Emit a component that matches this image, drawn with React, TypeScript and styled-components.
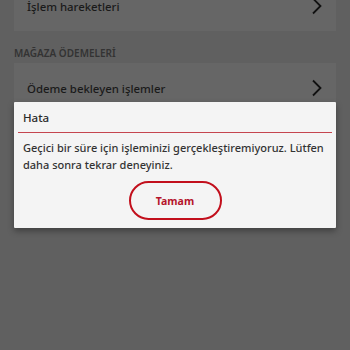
import React from "react";
import styled, { createGlobalStyle } from "styled-components";

const Global = createGlobalStyle`
  html, body { margin: 0; padding: 0; }
  body {
    width: 350px; height: 350px; overflow: hidden;
    background: #606060;
    font-family: "Noto Sans", "Open Sans", sans-serif;
  }
`;

const Screen = styled.div`
  position: relative;
  width: 350px;
  height: 350px;
  background: #606060;
  overflow: hidden;
`;

const Page = styled.div`
  display: flex;
  flex-direction: column;
  margin-top: -19px;
`;

const Card = styled.div`
  margin: 0 14px;
  background: #666666;
`;

const Row = styled.div`
  height: 50px;
  display: flex;
  align-items: center;
  justify-content: space-between;
  padding: 0 13px 0 13px;
  font-size: 11.4px;
  font-weight: 500;
  color: #1a1a1a;
`;

const SectionTitle = styled.div<{ $top: number }>`
  padding: ${(p) => p.$top}px 14px 3px;
  font-size: 10px;
  font-weight: 600;
  color: #333333;
`;

const Chevron = () => (
  <svg width="12" height="18" viewBox="0 0 12 18">
    <path d="M2 1.5 L9.5 9 L2 16.5" fill="none" stroke="#111" strokeWidth="1.8" />
  </svg>
);

const Dialog = styled.div`
  position: absolute;
  left: 14px;
  top: 102px;
  width: 322px;
  background: #f4f4f4;
  box-shadow: 0 3px 6px rgba(0, 0, 0, 0.35);
  border-radius: 1px;
  display: flex;
  flex-direction: column;
`;

const Title = styled.div`
  margin: 0 4px;
  padding: 8px 5px 7px;
  font-size: 11.5px;
  font-weight: 500;
  color: #2a2a2a;
  border-bottom: 1px solid #c5454f;
`;

const Body = styled.div`
  padding: 6px 9px 0;
  font-size: 11px;
  line-height: 17px;
  font-weight: 500;
  color: #333;
`;

const Actions = styled.div`
  display: flex;
  justify-content: center;
  padding: 8px 0 8px;
`;

const Button = styled.button`
  width: 93px;
  height: 39px;
  border: 2px solid #c20f1c;
  border-radius: 20px;
  background: transparent;
  color: #b5132a;
  font-family: inherit;
  font-size: 10.5px;
  font-weight: 700;
  box-sizing: border-box;
`;

export default function App() {
  return (
    <>
      <Global />
      <Screen>
        <Page>
          <Card>
            <Row>
              İşlem hareketleri
              <Chevron />
            </Row>
          </Card>
          <SectionTitle $top={15}>MAĞAZA ÖDEMELERİ</SectionTitle>
          <Card>
            <Row>
              Ödeme bekleyen işlemler
              <Chevron />
            </Row>
          </Card>
        </Page>
        <Dialog>
          <Title>Hata</Title>
          <Body>
            Geçici bir süre için işleminizi gerçekleştiremiyoruz. Lütfen daha sonra tekrar deneyiniz.
          </Body>
          <Actions>
            <Button>Tamam</Button>
          </Actions>
        </Dialog>
      </Screen>
    </>
  );
}
